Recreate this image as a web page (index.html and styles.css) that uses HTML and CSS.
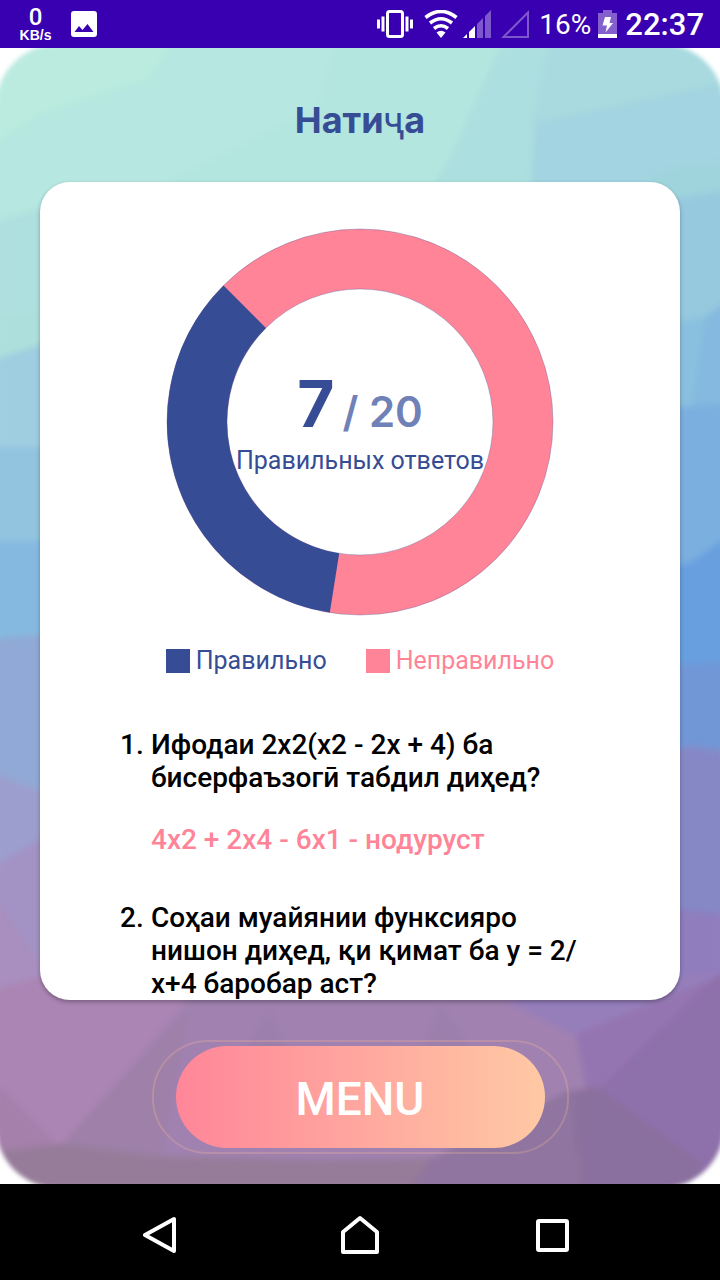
FILE: index.html
```html
<!DOCTYPE html>
<html lang="tg">
<head>
<meta charset="utf-8">
<meta name="viewport" content="width=device-width, initial-scale=1">
<title>Натиҷа</title>
<link rel="stylesheet" href="styles.css">
</head>
<body>
<header class="status">
  <div class="speed"><span class="speed-value">0</span><span class="speed-unit">KB/s</span></div>
  <svg class="icon" width="26" height="26" viewBox="0 0 26 26" aria-hidden="true"><path fill="#fff" fill-rule="evenodd" d="M3 0h20a3 3 0 0 1 3 3v20a3 3 0 0 1-3 3H3a3 3 0 0 1-3-3V3a3 3 0 0 1 3-3zM3.500 21h19l-6-8-5 6-3.500-4z"/></svg>
  <div class="status-right">
    <svg class="vibrate" width="36" height="28" viewBox="0 0 36 28" aria-hidden="true"><rect x="10.500" y="1.500" width="15" height="25" rx="2" fill="none" stroke="#fff" stroke-width="3"/><path stroke="#fff" stroke-width="3" d="M1.500 9.500v9M6 6.500v15M30 6.500v15M34.500 9.500v9"/></svg>
    <svg class="wifi" width="34" height="28" viewBox="0 0 34 28" aria-hidden="true"><g fill="none" stroke="#fff" stroke-width="3.600"><path d="M1.500 7.500Q17-4.500 32.500 7.500"/><path d="M6 13Q17 4.500 28 13"/><path d="M10 18.500Q17 13 24 18.500"/></g><path fill="#fff" d="M12.500 22.500Q17 19 21.500 22.500L17 28z"/></svg>
    <svg class="signal" width="28" height="28" viewBox="0 0 28 28" aria-hidden="true"><path fill="#fff" d="M0 28l4-4v4zM6 22l6-6v12H6z"/><path fill="#7d58cc" d="M14 14l6-6v20h-6zM22 6l6-6v28h-6z"/></svg>
    <svg class="signal-empty" width="28" height="28" viewBox="0 0 28 28" aria-hidden="true"><path fill="none" stroke="#7d58cc" stroke-width="2" d="M2.500 27L27 2.500V27z"/></svg>
    <span class="percent">16%</span>
    <svg class="battery" width="19" height="28" viewBox="0 0 19 28" aria-hidden="true"><path fill="#8360ce" d="M5 0h9v3h5v25H0V3h5z"/><path fill="#fff" d="M0 24h19v4H0zM7 7h6l-1.500 6H15L7.500 22.500 9 15.500H4.500z"/></svg>
    <time class="clock">22:37</time>
  </div>
</header>

<main class="app">
  <svg class="backdrop" viewBox="0 0 720 1136" preserveAspectRatio="none" aria-hidden="true">
    <defs>
      <filter id="soft" x="-5%" y="-5%" width="110%" height="110%"><feGaussianBlur stdDeviation="3"/></filter>
      <filter id="edge" x="-5%" y="-5%" width="110%" height="110%"><feGaussianBlur stdDeviation="2"/></filter>
      <mask id="corners"><rect filter="url(#edge)" fill="#fff" x="-4" y="-4" width="728" height="1144" rx="62"/></mask>
    </defs>
    <g mask="url(#corners)"><g filter="url(#soft)">
      <path fill="#b2e6df" d="M-20-20h760v1180H-20z"/>
      <path fill="#bbebdf" d="M-20-20H200L150 30 40 66-20 110z"/>
      <path fill="#b6e7e0" d="M180-20H340L318 60 170 134 60 170-20 180V105L40 66 150 30z"/>
      <path fill="#acdfdf" d="M500 0L555-20 530 190H400L450 110z"/>
      <path fill="#a8dadf" d="M553-20H740V60L530 80z"/>
      <path fill="#a3d4e1" d="M535 75L740 32V160H530z"/>
      <path fill="#aee0df" d="M-20 178L60 155V290L-20 280z"/>
      <path fill="#ade0dc" d="M-20 270L60 265V300L-20 320z"/>
      <path fill="#9fcee1" d="M-20 316L60 290V402H-20z"/>
      <path fill="#92c4e0" d="M-20 399H60V496H-20z"/>
      <path fill="#86b9e0" d="M-20 493H60V595H-20z"/>
      <path fill="#91a9d6" d="M-20 592L60 585V755L-20 725z"/>
      <path fill="#9c9fcd" d="M-20 720L60 750V800L-20 830z"/>
      <path fill="#a393c4" d="M-20 825L60 780V955H-20z"/>
      <path fill="#a88fbf" d="M-20 825L50 930-20 950z"/>
      <path fill="#9fd4dd" d="M650 125L740 110V150L650 160z"/>
      <path fill="#96c9de" d="M650 155L740 140V290H650z"/>
      <path fill="#8ac0df" d="M650 280L720 265V370H650z"/>
      <path fill="#85b9df" d="M705 270L740 240V370H690z"/>
      <path fill="#7aafdf" d="M650 362L740 354V530H650z"/>
      <path fill="#689fdf" d="M650 522L690 515 740 480V635H650z"/>
      <path fill="#7197d6" d="M650 618L740 614V720H650z"/>
      <path fill="#8688c6" d="M650 710L690 698 740 705V880H650z"/>
      <path fill="#8f7dbd" d="M650 858L740 868V980H650z"/>
      <path fill="#a081b0" d="M45 935H675V1160H45z"/>
      <path fill="#ab85b3" d="M-20 945L45 928 190 950 60 1100-20 1100z"/>
      <path fill="#a480aa" d="M-20 1020L58 1098-20 1120z"/>
      <path fill="#9e80a8" d="M188 962L160 1112 60 1098z"/>
      <path fill="#9d7fac" d="M270 960L290 1010 240 1010zM440 955L480 1010 400 1060z"/>
      <path fill="#967ebb" d="M500 950L740 920V950L580 990z"/>
      <path fill="#9575b1" d="M576 986L740 920 590 1060z"/>
      <path fill="#8e70aa" d="M590 1050L708 935 740 910V1160H660z"/>
      <path fill="#8a6f9e" d="M570 1045L595 1038 700 1115V1160H560z"/>
      <path fill="#967c99" d="M-20 1106L60 1096 150 1108 320 1112 580 1108V1160H-20z"/>
      <path fill="#8f759f" d="M430 1112L574 1040 580 1160H400z"/>
    </g></g>
  </svg>

  <h1 class="title">Нати<span class="title-alt">ҷ</span>а</h1>

  <section class="card">
    <div class="chart">
      <svg class="donut" viewBox="0 0 388 388" role="img" aria-label="7 / 20">
        <g fill="none">
          <circle cx="194" cy="194" r="163" stroke="#ff8497" stroke-width="60"/>
          <circle cx="194" cy="194" r="163" stroke="#364c95" stroke-width="60" pathLength="100" stroke-dasharray="35 65" transform="rotate(99 194 194)"/>
          <circle cx="194" cy="194" r="193" stroke="#364c95" stroke-opacity=".3"/>
          <circle cx="194" cy="194" r="133" stroke="#364c95" stroke-opacity=".3"/>
        </g>
      </svg>
      <div class="score">
        <p class="score-line"><strong class="score-value">7</strong><span class="score-total">/ 20</span></p>
        <p class="score-label">Правильных ответов</p>
      </div>
    </div>
    <ul class="legend">
      <li class="legend-item right">Правильно</li>
      <li class="legend-item wrong">Неправильно</li>
    </ul>
    <ol class="questions">
      <li class="question"><span>1.</span><div><p>Ифодаи 2x2(x2 - 2x + 4) ба бисерфаъзогӣ табдил диҳед?</p><p class="answer">4x2 + 2x4 - 6x1 - нодуруст</p></div></li>
      <li class="question"><span>2.</span><div><p>Соҳаи муайянии функсияро нишон диҳед, қи қимат ба y = 2/<wbr>x+4 баробар аст?</p></div></li>
    </ol>
  </section>

  <div class="menu-frame"><button class="menu" type="button">MENU</button></div>
</main>

<nav class="navbar">
  <button class="nav-button" type="button" aria-label="Back"><svg width="50" height="40" viewBox="0 0 50 40"><path fill="none" stroke="#fff" stroke-width="4" stroke-linejoin="round" d="M31 4v32L2 20z"/></svg></button>
  <button class="nav-button" type="button" aria-label="Home"><svg width="40" height="40" viewBox="0 0 40 40"><path fill="none" stroke="#fff" stroke-width="4" stroke-linejoin="round" d="M3 17L20 3l17 14v20H3z"/></svg></button>
  <button class="nav-button" type="button" aria-label="Recent"><svg width="34" height="34" viewBox="0 0 34 34"><rect x="3" y="3" width="29" height="29" rx="1" fill="none" stroke="#fff" stroke-width="4"/></svg></button>
</nav>
</body>
</html>
```
FILE: styles.css
```css
* { box-sizing: border-box; }

body {
  margin: 0;
  height: 100vh;
  display: flex;
  flex-direction: column;
  background: #fff;
  font-family: Roboto, "Noto Sans", sans-serif;
  color: #000;
}

h1, p, ul, ol { margin: 0; padding: 0; }
ul, ol { list-style: none; }
button { border: 0; padding: 0; font: inherit; cursor: pointer; }
svg { display: block; flex: none; }

.status {
  flex: none;
  height: 48px;
  padding: 0 16px 0 18px;
  display: flex;
  align-items: center;
  background: #3900b1;
  color: #fff;
}

.speed {
  width: 53px;
  padding-right: 18px;
  display: flex;
  flex-direction: column;
  align-items: center;
}

.speed-value { font-size: 24px; font-weight: 500; line-height: 22px; }
.speed-unit { font: 700 14px/14px "Liberation Sans", sans-serif; }

.status-right {
  margin-left: auto;
  display: flex;
  align-items: center;
}

.wifi { margin-left: 11px; }
.signal { margin-left: 5px; }
.signal-empty { margin-left: 10px; }
.percent { padding-top: 2px; margin-left: 10px; font-size: 28px; line-height: 46px; }
.battery { margin-left: 7px; }
.clock { padding-top: 2px; margin-left: 8px; font-size: 31px; font-weight: 500; line-height: 46px; }

.app {
  position: relative;
  flex: 1;
  min-height: 0;
  padding: 48px 40px 30px;
  display: flex;
  flex-direction: column;
  align-items: center;
}

.backdrop {
  position: absolute;
  inset: 0;
  width: 100%;
  height: 100%;
  z-index: -1;
}

.title {
  font: 700 36px/48px Inter, sans-serif;
  color: #364c95;
}

.title-alt { font-family: Roboto, sans-serif; font-weight: 400; }

.card {
  flex: 1;
  min-height: 0;
  align-self: stretch;
  margin: 37px 0 40px;
  padding-top: 46px;
  overflow: hidden;
  border-radius: 30px;
  background: #fff;
  box-shadow: 0 2px 4px rgba(0, 0, 0, .3);
}

.chart {
  width: 388px;
  margin: 0 auto;
  display: grid;
  place-items: center;
}

.donut, .score { grid-area: 1 / 1; }
.donut { width: 100%; }

.score {
  padding-top: 8px;
  text-align: center;
  color: #364c95;
  white-space: nowrap;
}

.score-line {
  display: flex;
  justify-content: center;
  align-items: baseline;
  gap: 8px;
  font-family: Inter, sans-serif;
}

.score-value { font-size: 64px; line-height: 70px; }
.score-total { font-size: 42px; font-weight: 600; color: #7081b7; }
.score-label { font-size: 25px; line-height: 44px; }

.legend {
  margin-top: 28px;
  display: flex;
  justify-content: center;
  gap: 39px;
  font-size: 25px;
  line-height: 33px;
}

.legend-item { display: flex; align-items: center; gap: 6px; }
.legend-item::before { content: ""; width: 24px; height: 24px; background: currentColor; }
.right { color: #364c95; }
.wrong { color: #ff8497; }

.questions {
  margin-top: 51px;
  padding: 0 80px;
  display: grid;
  gap: 45px;
  font-size: 28px;
  font-weight: 500;
  line-height: 33px;
}

.question { display: grid; grid-template-columns: 31px 1fr; }
.answer { margin-top: 29px; color: #ff8497; }

.menu-frame {
  flex: none;
  padding: 4px 22px;
  border: 2px solid rgba(255, 190, 150, .25);
  border-radius: 56px;
}

.menu {
  display: block;
  width: 369px;
  height: 102px;
  padding-top: 4px;
  border-radius: 51px;
  background: linear-gradient(90deg, #ff8699, #ffc9a4);
  color: #fff;
  font-size: 46px;
  font-weight: 500;
}

.navbar {
  flex: none;
  height: 96px;
  padding-top: 6px;
  display: flex;
  justify-content: center;
  background: #000;
}

.nav-button {
  width: 192px;
  display: grid;
  place-items: center;
  background: none;
}
```
